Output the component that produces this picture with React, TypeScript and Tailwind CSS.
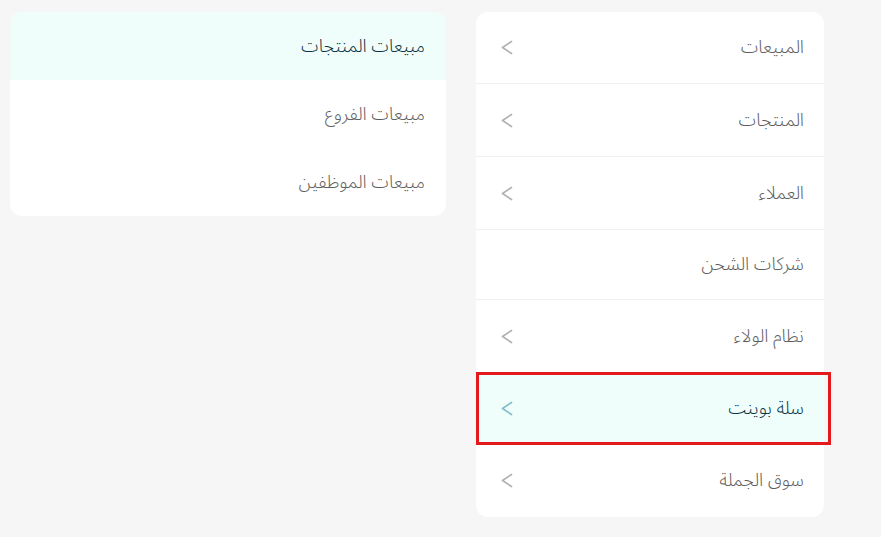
import React from 'react';

interface MenuItem {
  label: string;
  chevron: boolean;
  h: string;
  active?: boolean;
  marked?: boolean;
}

const reportItems: MenuItem[] = [
  { label: 'المبيعات', chevron: true, h: 'h-[72px]' },
  { label: 'المنتجات', chevron: true, h: 'h-[73px]' },
  { label: 'العملاء', chevron: true, h: 'h-[73px]' },
  { label: 'شركات الشحن', chevron: false, h: 'h-[70px]' },
  { label: 'نظام الولاء', chevron: true, h: 'h-[73px]' },
  { label: 'سلة بوينت', chevron: true, h: 'h-[71px]', active: true, marked: true },
  { label: 'سوق الجملة', chevron: true, h: 'h-[73px]' },
];

const subItems = [
  { label: 'مبيعات المنتجات', active: true },
  { label: 'مبيعات الفروع', active: false },
  { label: 'مبيعات الموظفين', active: false },
];

const Chevron: React.FC<{ active?: boolean }> = ({ active }) => (
  <svg
    width="12"
    height="15"
    viewBox="0 0 12 15"
    fill="none"
    stroke={active ? '#86bfcb' : '#b3b3b3'}
    strokeWidth="1.7"
    strokeLinecap="round"
    strokeLinejoin="round"
  >
    <path d="M10.5 1.5 L1.5 7.5 L10.5 13.5" />
  </svg>
);

const App: React.FC = () => {
  return (
    <div
      className="min-h-screen w-full bg-[#f6f6f6] pl-[10px] pt-[12px]"
      style={{ fontFamily: '"Noto Sans Arabic", "DejaVu Sans", sans-serif' }}
    >
      <div className="flex items-start gap-[30px]">
        <div dir="rtl" className="w-[436px] overflow-hidden rounded-xl bg-white">
          {subItems.map((item) => (
            <div
              key={item.label}
              className={`flex h-[68px] items-center pr-[21px] text-[18px] font-light ${
                item.active ? 'bg-[#effefb] text-[#0a3344]' : 'text-[#5e5e5e]'
              }`}
            >
              {item.label}
            </div>
          ))}
        </div>

        <div dir="rtl" className="w-[348px] rounded-xl bg-white">
          {reportItems.map((item, i) => (
            <div
              key={item.label}
              className={`relative flex items-center justify-between pl-[25px] pr-[20px] text-[18px] font-light ${item.h} ${
                i < reportItems.length - 1 && !item.active ? 'border-b border-[#f1f1f1]' : ''
              } ${item.active ? 'bg-[#effefb] text-[#0a3344]' : 'text-[#5e5e5e]'} ${
                i === reportItems.length - 1 ? 'rounded-b-xl' : ''
              }`}
            >
              <span>{item.label}</span>
              {item.chevron && <Chevron active={item.active} />}
              {item.marked && (
                <span className="pointer-events-none absolute -right-[7px] left-0 -top-[1px] -bottom-[1px] border-[3px] border-[#e3191c]" />
              )}
            </div>
          ))}
        </div>
      </div>
    </div>
  );
};

export default App;
